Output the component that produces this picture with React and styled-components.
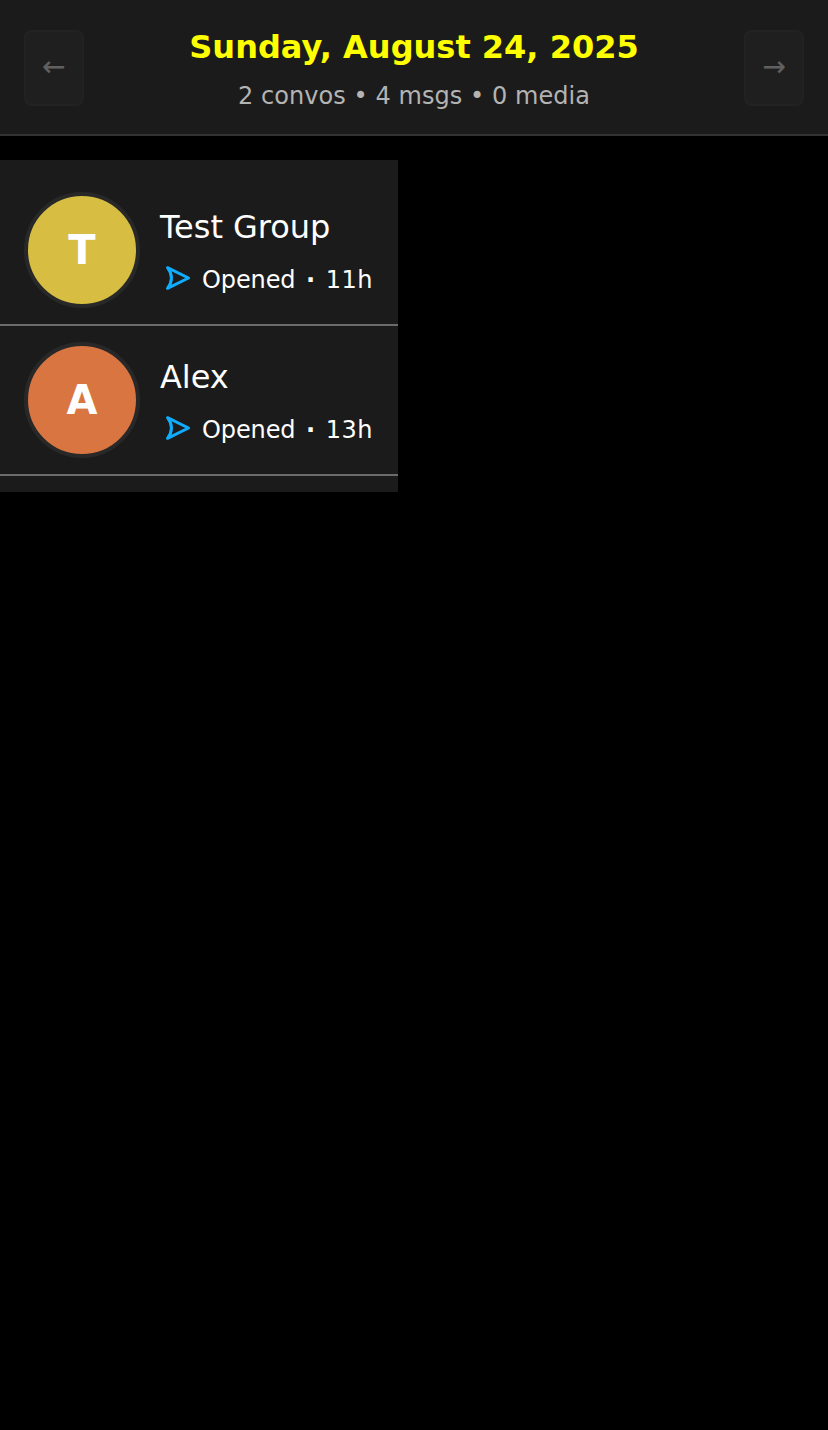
import React from "react";
import styled, { createGlobalStyle } from "styled-components";

const GlobalStyle = createGlobalStyle`
  * { box-sizing: border-box; }
  body {
    margin: 0;
    background: #000;
    color: #fff;
    font-family: "DejaVu Sans", sans-serif;
  }
`;

const Header = styled.header`
  display: flex;
  align-items: flex-start;
  justify-content: space-between;
  height: 136px;
  padding: 30px 24px 0;
  background: #1b1b1b;
  border-bottom: 2px solid #333;
`;

const NavButton = styled.button`
  width: 59.6px;
  height: 76px;
  padding: 0 0 4px;
  border: 2px solid #333;
  border-radius: 8px;
  background: #2a2a2a;
  color: #fff;
  font-family: inherit;
  font-size: 28px;
  opacity: 0.3;
`;

const Heading = styled.div`
  text-align: center;
`;

const DateTitle = styled.h1`
  margin: -1px 0 16px;
  color: #ffff00;
  font-size: 32px;
  font-weight: 700;
  line-height: 37px;
`;

const Stats = styled.div`
  color: #b3b3b3;
  font-size: 24px;
  line-height: 28px;
  letter-spacing: 0.06px;
`;

const ChatList = styled.main`
  width: 398px;
  margin-top: 24px;
  padding: 16px 0;
  background: #1b1b1b;
`;

const ChatRow = styled.div`
  display: flex;
  align-items: flex-start;
  gap: 20px;
  height: 150px;
  padding: 16px 24px;
  border-bottom: 2px solid #6b6b6b;
`;

const Avatar = styled.div`
  display: flex;
  align-items: center;
  justify-content: center;
  flex: none;
  width: 116px;
  height: 116px;
  border: 4px solid #282828;
  border-radius: 50%;
  background: ${(p) => p.$color};
  font-size: 40px;
  font-weight: 700;
`;

const ChatInfo = styled.div`
  padding-top: 13px;
  white-space: nowrap;
`;

const ChatName = styled.div`
  margin-bottom: 12px;
  font-size: 32px;
  line-height: 44px;
  letter-spacing: -0.03px;
`;

const Status = styled.div`
  display: flex;
  align-items: flex-start;
  height: 36px;
  font-size: 24px;
  line-height: 38px;
`;

const SendIcon = styled.svg`
  flex: none;
  width: 36px;
  height: 36px;
  margin: -1px 6px 0 0;
`;

const StatusLabel = styled.span`
  letter-spacing: -0.1px;
`;

const Dot = styled.span`
  margin: 0 10.6px 0 10.4px;
  font-weight: 700;
`;

const Time = styled.span`
  letter-spacing: 0.6px;
`;

const chats = [
  { name: "Test Group", color: "#d7bd42", time: "11h" },
  { name: "Alex", color: "#d87541", time: "13h" },
];

export default function App() {
  return (
    <>
      <GlobalStyle />
      <Header>
        <NavButton aria-label="Previous day">←</NavButton>
        <Heading>
          <DateTitle>Sunday, August 24, 2025</DateTitle>
          <Stats>2 convos • 4 msgs • 0 media</Stats>
        </Heading>
        <NavButton aria-label="Next day">→</NavButton>
      </Header>
      <ChatList>
        {chats.map((chat) => (
          <ChatRow key={chat.name}>
            <Avatar $color={chat.color}>{chat.name[0]}</Avatar>
            <ChatInfo>
              <ChatName>{chat.name}</ChatName>
              <Status>
                <SendIcon viewBox="0 0 36 36" fill="none" stroke="#0eadff" strokeWidth="3" strokeLinejoin="round">
                  <path d="M7.5 7.7L28.5 18L7.5 28.3Q15.4 18 7.5 7.7Z" />
                </SendIcon>
                <StatusLabel>Opened</StatusLabel>
                <Dot>·</Dot>
                <Time>{chat.time}</Time>
              </Status>
            </ChatInfo>
          </ChatRow>
        ))}
      </ChatList>
    </>
  );
}
